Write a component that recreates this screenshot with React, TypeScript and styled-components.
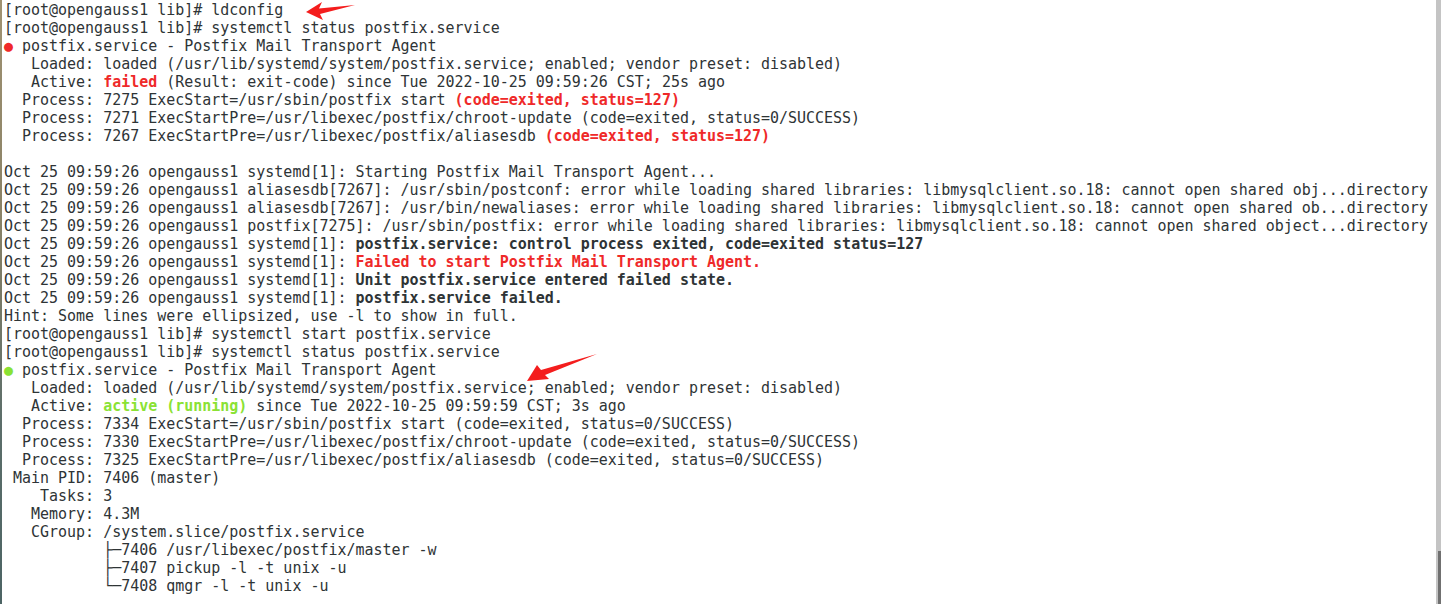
import React from "react";
import styled, { createGlobalStyle } from "styled-components";

const Global = createGlobalStyle`
  html, body { margin: 0; padding: 0; background: #ffffff; }
  body { width: 1441px; height: 604px; overflow: hidden; }
`;

const Window = styled.div`
  position: relative;
  display: flex;
  width: 1441px;
  height: 604px;
  background: #ffffff;
  overflow: hidden;
`;

const DesktopEdge = styled.div`
  width: 2px;
  flex: none;
  background: linear-gradient(180deg, #a09272 0%, #8a8266 35%, #5c6e6a 70%, #4c6464 100%);
`;

const Screen = styled.pre`
  flex: 1;
  margin: 0;
  padding: 0.5px 0 0 2px;
  font-family: "DejaVu Sans Mono", monospace;
  font-size: 14.98px;
  line-height: 18px;
  color: #2e3436;
  white-space: pre;
  overflow: hidden;
`;

const Line = styled.div`
  height: 18px;
`;

type Tone = "red" | "green" | "plain";

const Seg = styled.span<{ $tone?: Tone; $bold?: boolean }>`
  color: ${(p) => (p.$tone === "red" ? "#ef2929" : p.$tone === "green" ? "#8ae234" : "#2e3436")};
  font-weight: ${(p) => (p.$bold ? 700 : 400)};
`;

const Scrollbar = styled.div`
  width: 5px;
  flex: none;
  background: #c4c4c4;
  display: flex;
  flex-direction: column;
  justify-content: flex-end;
  align-items: center;
`;

const Thumb = styled.div`
  width: 3px;
  height: 53px;
  margin-left: 1px;
  background: #707070;
`;

const Arrows = styled.svg`
  position: absolute;
  left: 0;
  top: 0;
  pointer-events: none;
`;

const R = ({ children }: { children: React.ReactNode }) => (
  <Seg $tone="red" $bold>
    {children}
  </Seg>
);
const B = ({ children }: { children: React.ReactNode }) => <Seg $bold>{children}</Seg>;
const G = ({ children }: { children: React.ReactNode }) => (
  <Seg $tone="green" $bold>
    {children}
  </Seg>
);

const pre = "Oct 25 09:59:26 opengauss1 ";

const lines: React.ReactNode[] = [
  "[root@opengauss1 lib]# ldconfig",
  "[root@opengauss1 lib]# systemctl status postfix.service",
  <>
    <Seg $tone="red">●</Seg> postfix.service - Postfix Mail Transport Agent
  </>,
  "   Loaded: loaded (/usr/lib/systemd/system/postfix.service; enabled; vendor preset: disabled)",
  <>
    {"   Active: "}
    <R>failed</R> (Result: exit-code) since Tue 2022-10-25 09:59:26 CST; 25s ago
  </>,
  <>
    {"  Process: 7275 ExecStart=/usr/sbin/postfix start "}
    <R>(code=exited, status=127)</R>
  </>,
  "  Process: 7271 ExecStartPre=/usr/libexec/postfix/chroot-update (code=exited, status=0/SUCCESS)",
  <>
    {"  Process: 7267 ExecStartPre=/usr/libexec/postfix/aliasesdb "}
    <R>(code=exited, status=127)</R>
  </>,
  "",
  pre + "systemd[1]: Starting Postfix Mail Transport Agent...",
  pre + "aliasesdb[7267]: /usr/sbin/postconf: error while loading shared libraries: libmysqlclient.so.18: cannot open shared obj...directory",
  pre + "aliasesdb[7267]: /usr/bin/newaliases: error while loading shared libraries: libmysqlclient.so.18: cannot open shared ob...directory",
  pre + "postfix[7275]: /usr/sbin/postfix: error while loading shared libraries: libmysqlclient.so.18: cannot open shared object...directory",
  <>
    {pre + "systemd[1]: "}
    <B>postfix.service: control process exited, code=exited status=127</B>
  </>,
  <>
    {pre + "systemd[1]: "}
    <R>Failed to start Postfix Mail Transport Agent.</R>
  </>,
  <>
    {pre + "systemd[1]: "}
    <B>Unit postfix.service entered failed state.</B>
  </>,
  <>
    {pre + "systemd[1]: "}
    <B>postfix.service failed.</B>
  </>,
  "Hint: Some lines were ellipsized, use -l to show in full.",
  "[root@opengauss1 lib]# systemctl start postfix.service",
  "[root@opengauss1 lib]# systemctl status postfix.service",
  <>
    <Seg $tone="green">●</Seg> postfix.service - Postfix Mail Transport Agent
  </>,
  "   Loaded: loaded (/usr/lib/systemd/system/postfix.service; enabled; vendor preset: disabled)",
  <>
    {"   Active: "}
    <G>active (running)</G> since Tue 2022-10-25 09:59:59 CST; 3s ago
  </>,
  "  Process: 7334 ExecStart=/usr/sbin/postfix start (code=exited, status=0/SUCCESS)",
  "  Process: 7330 ExecStartPre=/usr/libexec/postfix/chroot-update (code=exited, status=0/SUCCESS)",
  "  Process: 7325 ExecStartPre=/usr/libexec/postfix/aliasesdb (code=exited, status=0/SUCCESS)",
  " Main PID: 7406 (master)",
  "    Tasks: 3",
  "   Memory: 4.3M",
  "   CGroup: /system.slice/postfix.service",
  "           ├─7406 /usr/libexec/postfix/master -w",
  "           ├─7407 pickup -l -t unix -u",
  "           └─7408 qmgr -l -t unix -u",
];

export default function App() {
  return (
    <>
      <Global />
      <Window>
        <DesktopEdge />
        <Screen>
          {lines.map((l, i) => (
            <Line key={i}>{l}</Line>
          ))}
        </Screen>
        <Scrollbar>
          <Thumb />
        </Scrollbar>
        <Arrows width="1441" height="604" viewBox="0 0 1441 604">
          <polygon
            fill="#f41d1d"
            points="306,12 322,2 319,8.5 355,5 320,14 323,20"
          />
          <polygon
            fill="#f41d1d"
            points="527,381 537,365 541,370 597,354 545,375 549,379"
          />
        </Arrows>
      </Window>
    </>
  );
}
